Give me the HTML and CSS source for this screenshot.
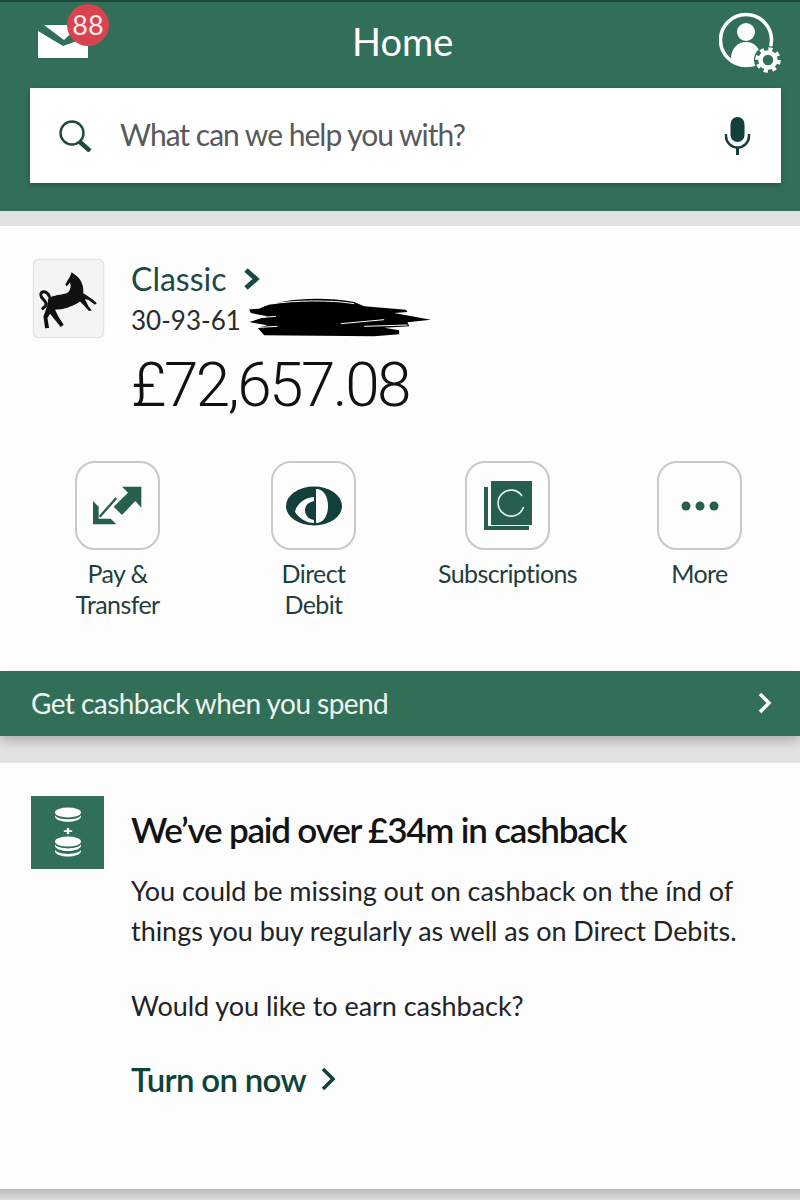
FILE: index.html
```html
<!DOCTYPE html>
<html lang="en">
<head>
<meta charset="utf-8">
<title>Home</title>
<link rel="stylesheet" href="styles.css">
</head>
<body>
<header class="top">
  <div class="top-row">
    <div class="mail">
      <svg class="mail-icon" width="50" height="33" viewBox="0 0 50 33"><path fill="#fff" d="M0 6 25 21 50 12V33H0Z"/><path fill="#fff" d="M6 0H42L26 15Z"/></svg>
      <span class="badge">88</span>
    </div>
    <h1 class="title">Home</h1>
    <svg class="profile" width="62" height="62" viewBox="0 0 62 62">
      <circle cx="27" cy="28" r="25.500" fill="none" stroke="#fff" stroke-width="3.500"/>
      <circle cx="27" cy="20" r="9" fill="#fff"/>
      <path d="M12 47C12 36 19 30 27 30S42 36 42 47L38 53C31 56 19 56 12 47Z" fill="#fff"/>
      <circle cx="49" cy="48" r="14" fill="#326f59"/>
      <circle cx="49" cy="48" r="7.500" fill="none" stroke="#fff" stroke-width="4.500"/>
      <circle cx="49" cy="48" r="11" fill="none" stroke="#fff" stroke-width="3.500" stroke-dasharray="4.200 4.440"/>
    </svg>
  </div>
  <div class="search">
    <svg class="search-icon" width="33" height="32" viewBox="0 0 33 32"><circle cx="13" cy="13" r="11.500" fill="none" stroke="#1d4a40" stroke-width="2.400"/><path d="M21 22 31 31" stroke="#1d4a40" stroke-width="4.500"/></svg>
    <span class="search-text">What can we help you with?</span>
    <svg class="mic" width="27" height="38" viewBox="0 0 27 38"><rect x="6.500" y="0" width="14" height="25" rx="7" fill="#123f39"/><path d="M2 17V19A11.500 11.500 0 0 0 25 19V17" fill="none" stroke="#123f39" stroke-width="2.400"/><path d="M13.500 30V38" stroke="#123f39" stroke-width="3"/></svg>
  </div>
</header>

<section class="account">
  <div class="account-head">
    <div class="logo">
      <svg width="71" height="79" viewBox="39 27 213 238">
        <path fill="#111" d="M155 67 170 78C185 90 192 110 190 130L202 138 222 152 231 160 225 165 205 150 195 148 206 170 216 182 207 184 195 170 180 155C170 162 160 168 150 170 135 178 118 178 105 180L115 200 131 225 122 232 100 205 90 192 82 205 87 235 75 236 70 200 80 172 85 145C100 135 125 135 140 130 150 125 155 112 150 98L140 110 136 103 150 80Z"/>
        <path fill="none" stroke="#111" stroke-width="9" stroke-linecap="round" d="M88 140C80 122 62 122 62 135 62 148 78 150 78 162 78 170 70 174 68 176"/>
      </svg>
    </div>
    <div class="account-info">
      <a class="classic">Classic <svg class="chev" width="17" height="22" viewBox="0 0 17 22"><path d="M3 2 13 11 3 20" fill="none" stroke="#1a4a44" stroke-width="5"/></svg></a>
      <div class="sort">
        <span>30-93-61</span>
        <svg class="scribble" width="182" height="40" viewBox="745 170 545 120">
          <path fill="#000" d="M775 205C830 178 950 165 1060 185L1090 198 1215 208 1220 215 1180 218 1290 238 1220 246 1225 258 1150 262 1195 270 1195 282 1120 288 790 285 770 262 800 255 745 245 800 228 750 218 745 207Z"/>
          <path fill="none" stroke="#fff" stroke-width="3" d="M810 191C880 180 990 178 1060 190M775 232 825 228M760 262 830 258M1020 250 1150 238M1090 258 1220 254"/>
        </svg>
      </div>
      <div class="balance">£72,657.08</div>
    </div>
  </div>
  <div class="actions">
    <div class="action">
      <div class="action-box">
        <svg width="49" height="39" viewBox="135 110 147 117"><path fill="#265f4d" d="M280 112H222L240 130 197 172 222 197 262 155 280 175Z"/><path fill="#265f4d" d="M135 155V225H205L188 208H152V172Z"/><path d="M155 202 205 146" stroke="#265f4d" stroke-width="7" fill="none"/></svg>
      </div>
      <span class="action-label">Pay &amp;<br>Transfer</span>
    </div>
    <div class="action">
      <div class="action-box">
        <svg width="56" height="40" viewBox="0 0 56 40"><ellipse cx="28" cy="20" rx="28" ry="19.500" fill="#123f3c"/><path fill="#fff" d="M30 3C38 3 42 11 42 20S38 37 30 37Z"/><path fill="#fff" d="M28 11C16 12 10 20 9 26 13 32 20 37 28 37Z"/><path fill="#123f3c" d="M28 15V34C22 33 19 29 19 24 19 19 23 16 28 15Z"/></svg>
      </div>
      <span class="action-label">Direct<br>Debit</span>
    </div>
    <div class="action">
      <div class="action-box">
        <svg width="48" height="49" viewBox="0 0 48 49"><path fill="#265f4d" d="M0 6H4V45H45V49H0Z"/><rect x="7" y="0" width="41" height="44" fill="#265f4d"/><path d="M38 15A13 13 0 1 0 39.500 26" fill="none" stroke="#e9f2ee" stroke-width="1.600"/></svg>
      </div>
      <span class="action-label">Subscriptions</span>
    </div>
    <div class="action">
      <div class="action-box">
        <svg width="38" height="10" viewBox="0 0 38 10"><circle cx="5" cy="5" r="4.500" fill="#265f4d"/><circle cx="19" cy="5" r="4.500" fill="#265f4d"/><circle cx="33" cy="5" r="4.500" fill="#265f4d"/></svg>
      </div>
      <span class="action-label">More</span>
    </div>
  </div>
</section>

<a class="promo-bar">
  <span>Get cashback when you spend</span>
  <svg width="16" height="22" viewBox="0 0 16 22"><path d="M3 2 12 11 3 20" fill="none" stroke="#fff" stroke-width="3.500"/></svg>
</a>

<section class="cashback">
  <div class="coin-box">
    <svg width="26" height="51" viewBox="0 0 22 56" preserveAspectRatio="none"><ellipse cx="11" cy="6" rx="11" ry="5.500" fill="#fff"/><path d="M0 9C2 15 20 15 22 9V11C20 18 2 18 0 11Z" fill="#fff"/><path d="M11 23V30M7.500 26.500H14.500" stroke="#fff" stroke-width="2"/><ellipse cx="11" cy="38" rx="11" ry="5.500" fill="#fff"/><path d="M0 41C2 47 20 47 22 41V43C20 50 2 50 0 43Z" fill="#fff"/><path d="M0 47C2 53 20 53 22 47V49C20 56 2 56 0 49Z" fill="#fff"/></svg>
  </div>
  <div class="cashback-body">
    <h2 class="cashback-title">We’ve paid over £34m in cashback</h2>
    <p class="copy">You could be missing out on cashback on the índ of things you buy regularly as well as on Direct Debits.</p>
    <p class="copy question">Would you like to earn cashback?</p>
    <a class="turn-on">Turn on now <svg width="16" height="24" viewBox="0 0 16 24"><path d="M3 2 13 12 3 22" fill="none" stroke="#0f4238" stroke-width="3.500"/></svg></a>
  </div>
</section>
<div class="bottom-gap"></div>
</body>
</html>
```
FILE: styles.css
```css
* { box-sizing: border-box; }
html, body { margin: 0; padding: 0; }
body {
  width: 800px;
  height: 1200px;
  overflow: hidden;
  background: #e2e2e2;
  font-family: "Lato", "Liberation Sans", sans-serif;
  color: #1c2b2a;
}
.top {
  height: 211px;
  background: #326f59;
  padding: 0 19px 0 30px;
  border-top: 2px solid #1d4a3c;
}
.top-row {
  height: 86px;
  display: flex;
  align-items: center;
  justify-content: space-between;
  position: relative;
}
.mail { position: relative; width: 60px; height: 60px; }
.mail-icon { position: absolute; left: 8px; top: 10px; }
.badge {
  position: absolute;
  left: 37px;
  top: -11px;
  width: 42px;
  height: 42px;
  border-radius: 50%;
  background: #d8434f;
  color: #fbeaea;
  font-size: 27px;
  line-height: 42px;
  text-align: center;
}
.title {
  margin: 0;
  font-size: 38px;
  font-weight: 400;
  color: #fff;
  position: absolute;
  left: 322px;
  top: 16px;
}
.profile { margin-bottom: 4px; }
.search {
  width: 751px;
  height: 95px;
  background: #fff;
  display: flex;
  align-items: center;
  padding: 0 30px 0 29px;
  box-shadow: 0 2px 6px rgba(0, 0, 0, .25);
}
.search-icon { flex: none; margin-right: 28px; }
.search-text { flex: 1; font-size: 30px; letter-spacing: -1px; color: #58595b; padding-bottom: 3px; }
.account {
  margin-top: 15px;
  height: 445px;
  background: #fdfdfd;
  padding: 33px 0 0;
}
.account-head { display: flex; padding-left: 33px; }
.logo {
  width: 71px;
  height: 79px;
  background: #f4f4f4;
  border: 1px solid #e4e4e4;
  border-radius: 6px;
  box-shadow: 0 0 1px rgba(0, 0, 0, .2);
  flex: none;
}
.logo svg { display: block; margin: -1px; }
.account-info { margin-left: 27px; }
.classic {
  display: flex;
  align-items: center;
  gap: 16px;
  font-size: 32px;
  line-height: 40px;
  color: #1c4a47;
}
.sort {
  display: flex;
  align-items: center;
  font-size: 26px;
  line-height: 34px;
  height: 34px;
  margin-top: 4px;
  color: #2b2b2b;
}
.scribble { margin: 0 0 6px 8px; flex: none; }
.balance {
  font-family: "Roboto", "Liberation Sans", sans-serif;
  font-size: 62px;
  font-weight: 300;
  letter-spacing: -2.500px;
  line-height: 60px;
  margin-top: 18px;
  color: #111;
}
.actions {
  display: grid;
  grid-template-columns: 197px 195px 193px 191px;
  padding-left: 19px;
  margin-top: 46px;
}
.action { display: flex; flex-direction: column; align-items: center; }
.action-box {
  width: 85px;
  height: 89px;
  border: 2px solid #c9c9c9;
  border-radius: 20px;
  display: flex;
  align-items: center;
  justify-content: center;
  margin-bottom: 8px;
}
.action-label {
  font-size: 25px;
  letter-spacing: -.6px;
  line-height: 31px;
  color: #1f3f3c;
  text-align: center;
  white-space: nowrap;
}
.promo-bar {
  height: 65px;
  background: #326f59;
  color: #eef5f1;
  display: flex;
  align-items: center;
  justify-content: space-between;
  padding: 0 27px 2px 31px;
  font-size: 28px;
  letter-spacing: -.55px;
  box-shadow: 0 5px 10px rgba(0, 0, 0, .22);
  position: relative;
}
.cashback {
  margin-top: 27px;
  height: 426px;
  background: #fdfdfd;
  display: flex;
  padding: 33px 0 0 31px;
}
.coin-box {
  width: 73px;
  height: 73px;
  background: #326f59;
  display: flex;
  align-items: center;
  justify-content: center;
  flex: none;
}
.cashback-body { margin-left: 27px; width: 625px; }
.cashback-title {
  margin: 10px 0 0;
  font-size: 35px;
  font-weight: 600;
  letter-spacing: -1.200px;
  line-height: 46px;
  color: #141414;
  white-space: nowrap;
}
.copy {
  margin: 0;
  font-size: 27px;
  line-height: 40px;
  letter-spacing: -.04px;
  color: #232323;
}
.cashback-title + .copy { margin-top: 19px; }
.question { margin-top: 35px; }
.turn-on {
  display: flex;
  align-items: center;
  gap: 14px;
  margin-top: 31px;
  font-size: 33px;
  font-weight: 600;
  letter-spacing: -.7px;
  line-height: 44px;
  color: #0f4238;
}
.bottom-gap { height: 11px; background: linear-gradient(#bcbcbc, #dcdcdc); }
```
